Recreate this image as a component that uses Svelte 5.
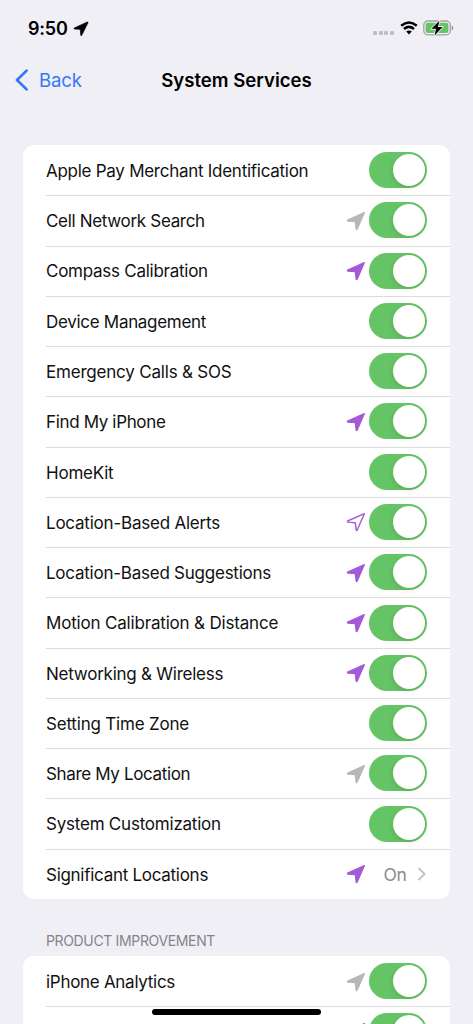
<script lang="ts">
  type Arrow = "gray" | "purple" | "outline";

  interface Service {
    label: string;
    arrow?: Arrow;
    value?: string;
    tracking?: number;
  }

  const services: Service[] = [
    { label: "Apple Pay Merchant Identification", tracking: -0.27 },
    { label: "Cell Network Search", arrow: "gray", tracking: -0.32 },
    { label: "Compass Calibration", arrow: "purple", tracking: -0.26 },
    { label: "Device Management", tracking: -0.3 },
    { label: "Emergency Calls & SOS", tracking: -0.2 },
    { label: "Find My iPhone", arrow: "purple", tracking: -0.35 },
    { label: "HomeKit", tracking: -0.22 },
    { label: "Location-Based Alerts", arrow: "outline", tracking: -0.22 },
    { label: "Location-Based Suggestions", arrow: "purple", tracking: -0.24 },
    { label: "Motion Calibration & Distance", arrow: "purple", tracking: -0.18 },
    { label: "Networking & Wireless", arrow: "purple", tracking: -0.24 },
    { label: "Setting Time Zone", tracking: -0.2 },
    { label: "Share My Location", arrow: "gray", tracking: -0.35 },
    { label: "System Customization", tracking: -0.22 },
    { label: "Significant Locations", arrow: "purple", value: "On", tracking: -0.28 },
  ];

  const improvements: Service[] = [
    { label: "iPhone Analytics", arrow: "gray", tracking: -0.29 },
    { label: "", arrow: "purple" },
  ];

  let enabled: Record<string, boolean> = $state(
    Object.fromEntries([...services, ...improvements].map((s) => [s.label, true])),
  );
</script>

{#snippet row(item: Service)}
  <div class="row">
    <span class="label" style:letter-spacing="{item.tracking ?? -0.25}px">{item.label}</span>
    {#if item.arrow}
      <svg class="arrow {item.arrow}" class:spaced={item.value} viewBox="0 0 20 20">
        <path d="M18.3 1.7 L1.6 9 Q1.2 9.8 2 10.1 L9.3 10.7 L10.2 18.2 Q10.6 18.9 11.1 18.2 Z" />
      </svg>
    {/if}
    {#if item.value}
      <span class="value">{item.value}</span>
      <svg class="disclosure" viewBox="0 0 8 14"><path d="M1 1.5 L6.6 7 L1 12.5" /></svg>
    {:else}
      <button
        class="toggle"
        class:on={enabled[item.label]}
        role="switch"
        aria-checked={enabled[item.label]}
        aria-label={item.label}
        onclick={() => (enabled[item.label] = !enabled[item.label])}
      >
        <span class="knob"></span>
      </button>
    {/if}
  </div>
{/snippet}

<div class="screen">
  <header class="status">
    <span class="time">9:50</span>
    <svg class="locating" viewBox="0 0 16 16">
      <path d="M14.2 1 L1.2 7 Q.5 7.8 1.5 8 L7.3 8.4 L7.7 14.2 Q8 15.2 8.8 14.2 L15 1.8 Q15.2 .7 14.2 1 Z" />
    </svg>
    <div class="indicators">
      <div class="dots"><i></i><i></i><i></i><i></i></div>
      <svg class="wifi" viewBox="0 0 18 14">
        <path d="M1.2 4.8 Q9 -1.8 16.8 4.8" />
        <path d="M4 8 Q9 3.8 14 8" />
        <path class="base" d="M6.2 10.6 Q9 8.4 11.8 10.6 L9 13.4 Z" />
      </svg>
      <svg class="battery" viewBox="0 0 32 16">
        <rect class="case" x=".8" y="1" width="26.4" height="13.8" rx="4" />
        <rect class="charge" x="2.6" y="2.8" width="22.8" height="10.2" rx="2.2" />
        <path class="cap" d="M28.7 5.5 Q30.3 6.1 30.3 8 Q30.3 9.8 28.7 10.4 Z" />
        <path class="bolt" d="M16.4 .8 L8.4 8.8 H13 L11.6 15.4 L19.6 6.9 H14.9 Z" />
      </svg>
    </div>
  </header>

  <nav>
    <button class="back">
      <svg viewBox="0 0 14 22"><path d="M11.6 1.6 L2 11 L11.6 20.4" /></svg>
      Back
    </button>
    <h1>System Services</h1>
  </nav>

  <section class="card">
    {#each services as item (item.label)}
      {@render row(item)}
    {/each}
  </section>

  <h2>PRODUCT IMPROVEMENT</h2>

  <section class="card">
    {#each improvements as item (item.label)}
      {@render row(item)}
    {/each}
  </section>

  <div class="home-indicator"></div>
</div>

<style>
  :global(body) {
    background: #f0eff5;
  }

  .screen {
    position: relative;
    height: 1024px;
    overflow: hidden;
    background: #f0eff5;
    color: #111;
    font-family: Inter, "Liberation Sans", sans-serif;
  }

  button {
    border: none;
    background: none;
    padding: 0;
    font: inherit;
  }

  .status {
    display: flex;
    align-items: center;
    height: 57px;
    padding: 0 18px 0 28px;
    box-sizing: border-box;
  }

  .time {
    width: 45px;
    font-size: 18px;
    font-weight: 600;
    letter-spacing: -0.2px;
    color: #000;
  }

  .locating {
    width: 16px;
    height: 16px;
    stroke: #000;
    stroke-width: 0.6;
  }

  .indicators {
    display: flex;
    align-items: center;
    margin-left: auto;
  }

  .dots {
    display: flex;
    gap: 1.7px;
    margin: 9px 6px 0 0;
  }

  .dots i {
    width: 4px;
    height: 4px;
    border-radius: 1.3px;
    background: #bdbdc0;
  }

  .wifi {
    width: 18px;
    height: 14px;
    margin: -1px 5px 0 0;
    fill: none;
    stroke: #000;
    stroke-width: 2.5;
  }

  .wifi .base {
    fill: #000;
    stroke: none;
  }

  .battery {
    width: 32px;
    height: 16px;
    margin-top: -1px;
  }

  .case {
    fill: none;
    stroke: #a3a3a6;
    stroke-width: 1.3;
  }

  .charge {
    fill: #65c466;
  }

  .cap {
    fill: #929295;
  }

  .bolt {
    fill: #000;
    stroke: #f0eff5;
    stroke-width: 1.8;
    paint-order: stroke;
    stroke-linejoin: round;
  }

  nav {
    position: relative;
    display: flex;
    align-items: center;
    justify-content: center;
    height: 46px;
    margin-bottom: 42px;
  }

  .back {
    position: absolute;
    left: 14.5px;
    display: flex;
    align-items: center;
    gap: 10.5px;
    color: #3478f6;
    font-size: 18.6px;
    letter-spacing: -0.15px;
  }

  .back svg {
    width: 14px;
    height: 22px;
    fill: none;
    stroke: #3478f6;
    stroke-width: 2.7;
    stroke-linecap: round;
    stroke-linejoin: round;
  }

  h1 {
    margin: 0;
    font-size: 18.6px;
    font-weight: 600;
    letter-spacing: 0;
    color: #000;
  }

  .card {
    margin: 0 23px;
    border-radius: 11px;
    background: #fff;
    overflow: hidden;
  }

  .row {
    display: flex;
    align-items: center;
    height: 50.27px;
    margin-left: 23px;
    padding: 1px 23px 0 0;
    box-sizing: border-box;
  }

  .row + .row {
    box-shadow: inset 0 1px #dcdcde;
  }

  .label {
    flex: 1;
    padding-top: 0.6px;
    font-size: 17px;
    white-space: nowrap;
  }

  .arrow {
    width: 20px;
    height: 20px;
    margin-right: 3px;
    fill: #a35bd6;
    stroke: #a35bd6;
    stroke-width: 1.3;
    stroke-linejoin: round;
  }

  .arrow.gray {
    fill: #b7b7ba;
    stroke: #b7b7ba;
  }

  .arrow.outline {
    fill: none;
    stroke-width: 1.4;
  }

  .arrow.spaced {
    margin-right: 17.5px;
  }

  .value {
    font-size: 17.5px;
    letter-spacing: -0.3px;
    color: #8a8a8e;
    width: 34.5px;
  }

  .disclosure {
    width: 8px;
    height: 14px;
    margin-right: 1px;
    fill: none;
    stroke: #c2c2c5;
    stroke-width: 1.8;
    stroke-linecap: round;
    stroke-linejoin: round;
  }

  .toggle {
    display: flex;
    width: 58.5px;
    height: 36px;
    margin-top: -1px;
    padding: 2px;
    border-radius: 18px;
    background: #e9e9ea;
    box-sizing: border-box;
  }

  .toggle.on {
    justify-content: flex-end;
    background: #65c466;
  }

  .knob {
    width: 32px;
    height: 32px;
    border-radius: 50%;
    background: #fff;
    box-shadow: -1px 2px 5px rgba(0, 0, 0, 0.1);
  }

  h2 {
    margin: 0;
    padding: 33px 46px 6px;
    font-size: 14px;
    line-height: 18px;
    font-weight: 400;
    letter-spacing: -0.35px;
    color: #858589;
  }

  .home-indicator {
    position: absolute;
    left: 152px;
    bottom: 9px;
    width: 169px;
    height: 6px;
    border-radius: 3px;
    background: #000;
  }
</style>
